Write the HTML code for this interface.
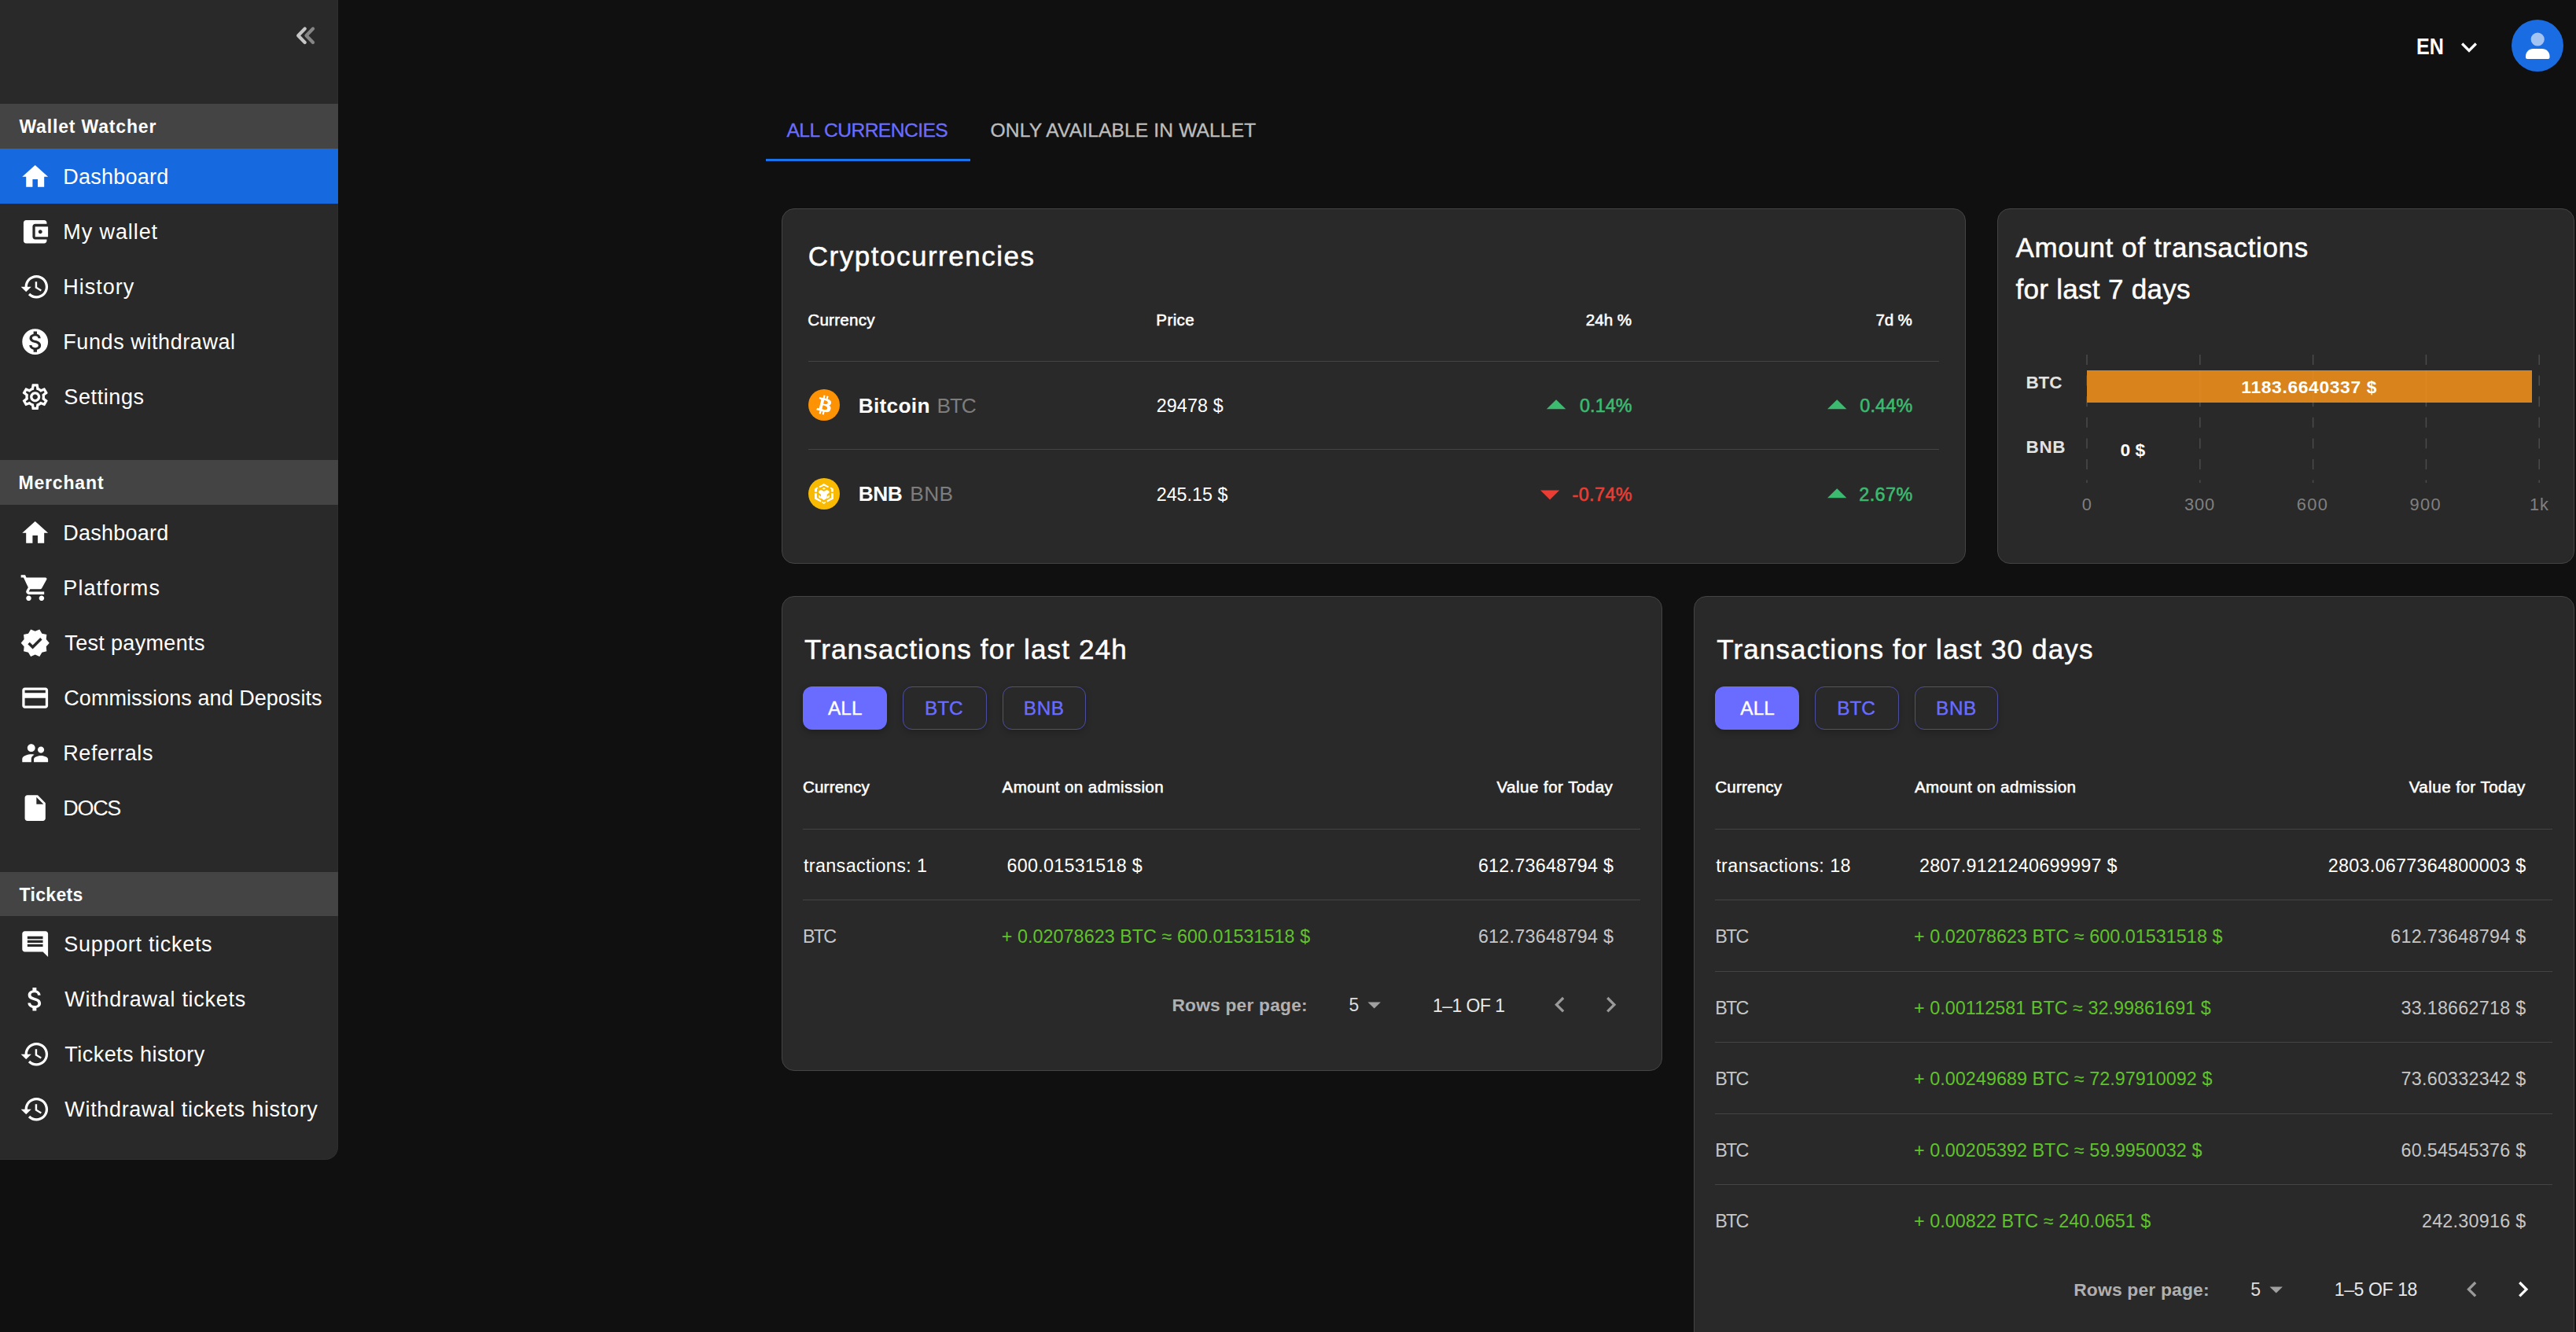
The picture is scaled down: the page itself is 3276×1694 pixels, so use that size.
<!DOCTYPE html>
<html><head><meta charset="utf-8"><title>Dashboard</title>
<style>
html,body{margin:0;padding:0;}
body{width:3276px;height:1694px;overflow:hidden;background:#101010;position:relative;font-family:"Liberation Sans",sans-serif;}
.t{position:absolute;white-space:pre;line-height:1;}
.b{position:absolute;box-sizing:content-box;}
.card{background:#292929;border:1px solid #444;border-radius:16px;box-sizing:border-box;}
</style></head><body>
<div class="b" style="left:0px;top:0px;width:429px;height:1474px;background:#292929;border-bottom-right-radius:16px;border-right:1px solid #2f2f2f;border-bottom:1px solid #2f2f2f;"></div>
<svg class="b" style="left:370px;top:28px" width="36" height="34" viewBox="370 28 36 34"><path d="M387.7 36.6 L379.2 45.2 L387.7 53.9" fill="none" stroke="#c6c6c6" stroke-width="4.3" stroke-linecap="round" stroke-linejoin="round"/><path d="M398 36.6 L389.5 45.2 L398 53.9" fill="none" stroke="#858585" stroke-width="4.3" stroke-linecap="round" stroke-linejoin="round"/></svg>
<div class="b" style="left:0px;top:132px;width:430px;height:57px;background:#444444;"></div>
<span class="t" style="left:24.40px;top:149.53px;font-size:23px;color:#fff;font-weight:700;letter-spacing:0.830px;">Wallet Watcher</span>
<div class="b" style="left:0px;top:189px;width:430px;height:70px;background:#1769e0;"></div>
<svg class="b" style="left:24.70px;top:204.60px;" width="39.4" height="39.4" viewBox="0 0 24 24"><path fill="#fff" d="M10 20v-6h4v6h5v-8h3L12 3 2 12h3v8z"/></svg>
<span class="t" style="left:80.30px;top:211.74px;font-size:27px;color:#fff;letter-spacing:0.241px;">Dashboard</span>
<svg class="b" style="left:24.70px;top:274.60px;" width="39.4" height="39.4" viewBox="0 0 24 24"><path fill="#fff" d="M21 18v1c0 1.1-.9 2-2 2H5c-1.11 0-2-.9-2-2V5c0-1.1.89-2 2-2h14c1.1 0 2 .9 2 2v1h-9c-1.11 0-2 .9-2 2v8c0 1.1.89 2 2 2h9zm-9-2h10V8H12v8zm4-2.5c-.83 0-1.5-.67-1.5-1.5s.67-1.5 1.5-1.5 1.5.67 1.5 1.5-.67 1.5-1.5 1.5z"/></svg>
<span class="t" style="left:80.30px;top:281.74px;font-size:27px;color:#fff;letter-spacing:0.910px;">My wallet</span>
<svg class="b" style="left:24.70px;top:344.60px;" width="39.4" height="39.4" viewBox="0 0 24 24"><path fill="#fff" d="M13 3c-4.97 0-9 4.03-9 9H1l3.89 3.89.07.14L9 12H6c0-3.87 3.13-7 7-7s7 3.13 7 7-3.13 7-7 7c-1.93 0-3.68-.79-4.94-2.06l-1.42 1.42C8.27 19.99 10.51 21 13 21c4.97 0 9-4.03 9-9s-4.03-9-9-9zm-1 5v5l4.28 2.54.72-1.21-3.5-2.08V8H12z"/></svg>
<span class="t" style="left:80.30px;top:351.74px;font-size:27px;color:#fff;letter-spacing:0.982px;">History</span>
<svg class="b" style="left:24.70px;top:414.60px;" width="39.4" height="39.4" viewBox="0 0 24 24"><path fill="#fff" d="M12 2C6.48 2 2 6.48 2 12s4.48 10 10 10 10-4.48 10-10S17.52 2 12 2zm1.41 16.09V20h-2.67v-1.93c-1.71-.36-3.16-1.46-3.27-3.4h1.96c.1 1.05.82 1.87 2.65 1.87 1.96 0 2.4-.98 2.4-1.59 0-.83-.44-1.61-2.67-2.14-2.48-.6-4.18-1.62-4.18-3.67 0-1.72 1.39-2.84 3.11-3.21V4h2.67v1.95c1.86.45 2.79 1.86 2.85 3.39H14.3c-.05-1.11-.64-1.87-2.22-1.87-1.5 0-2.4.68-2.4 1.64 0 .84.65 1.39 2.67 1.91s4.18 1.39 4.18 3.91c-.01 1.83-1.38 2.83-3.12 3.16z"/></svg>
<span class="t" style="left:80.30px;top:421.74px;font-size:27px;color:#fff;letter-spacing:0.580px;">Funds withdrawal</span>
<svg class="b" style="left:24.70px;top:484.60px;" width="39.4" height="39.4" viewBox="0 0 24 24"><path fill="#fff" d="M19.43 12.98c.04-.32.07-.64.07-.98 0-.34-.03-.66-.07-.98l2.11-1.65c.19-.15.24-.42.12-.64l-2-3.46c-.09-.16-.26-.25-.44-.25-.06 0-.12.01-.17.03l-2.49 1c-.52-.4-1.08-.73-1.69-.98l-.38-2.65C14.46 2.18 14.25 2 14 2h-4c-.25 0-.46.18-.49.42l-.38 2.65c-.61.25-1.17.59-1.69.98l-2.49-1c-.06-.02-.12-.03-.18-.03-.17 0-.34.09-.43.25l-2 3.46c-.13.22-.07.49.12.64l2.11 1.65c-.04.32-.07.65-.07.98 0 .33.03.66.07.98l-2.11 1.65c-.19.15-.24.42-.12.64l2 3.46c.09.16.26.25.44.25.06 0 .12-.01.17-.03l2.49-1c.52.4 1.08.73 1.69.98l.38 2.65c.03.24.24.42.49.42h4c.25 0 .46-.18.49-.42l.38-2.65c.61-.25 1.17-.59 1.69-.98l2.49 1c.06.02.12.03.18.03.17 0 .34-.09.43-.25l2-3.46c.12-.22.07-.49-.12-.64l-2.11-1.65zm-1.98-1.71c.04.31.05.52.05.73 0 .21-.02.43-.05.73l-.14 1.13.89.7 1.08.84-.7 1.21-1.27-.51-1.04-.42-.9.68c-.43.32-.84.56-1.25.73l-1.06.43-.16 1.13-.2 1.35h-1.4l-.19-1.35-.16-1.13-1.06-.43c-.43-.18-.83-.41-1.23-.71l-.91-.7-1.06.43-1.27.51-.7-1.21 1.08-.84.89-.7-.14-1.13c-.03-.31-.05-.54-.05-.74s.02-.43.05-.73l.14-1.13-.89-.7-1.08-.84.7-1.21 1.27.51 1.04.42.9-.68c.43-.32.84-.56 1.25-.73l1.06-.43.16-1.13.2-1.35h1.39l.19 1.35.16 1.13 1.06.43c.43.18.83.41 1.23.71l.91.7 1.06-.43 1.27-.51.7 1.21-1.07.85-.89.7.14 1.13zM12 8c-2.210 0-4 1.790-4 4s1.790 4 4 4 4-1.790 4-4-1.790-4-4-4zm0 6c-1.100 0-2-.9-2-2s.9-2 2-2 2 .9 2 2-.9 2-2 2z"/></svg>
<span class="t" style="left:81.30px;top:491.74px;font-size:27px;color:#fff;letter-spacing:0.606px;">Settings</span>
<div class="b" style="left:0px;top:585px;width:430px;height:57px;background:#444444;"></div>
<span class="t" style="left:23.40px;top:602.53px;font-size:23px;color:#fff;font-weight:700;letter-spacing:0.845px;">Merchant</span>
<svg class="b" style="left:24.70px;top:657.60px;" width="39.4" height="39.4" viewBox="0 0 24 24"><path fill="#fff" d="M10 20v-6h4v6h5v-8h3L12 3 2 12h3v8z"/></svg>
<span class="t" style="left:80.30px;top:664.74px;font-size:27px;color:#fff;letter-spacing:0.241px;">Dashboard</span>
<svg class="b" style="left:24.70px;top:727.60px;" width="39.4" height="39.4" viewBox="0 0 24 24"><path fill="#fff" d="M7 18c-1.1 0-1.99.9-1.99 2S5.9 22 7 22s2-.9 2-2-.9-2-2-2zM1 2v2h2l3.6 7.59-1.35 2.45c-.16.28-.25.61-.25.96 0 1.1.9 2 2 2h12v-2H7.42c-.14 0-.25-.11-.25-.25l.03-.12.9-1.63h7.45c.75 0 1.41-.41 1.75-1.03l3.58-6.49c.08-.14.12-.31.12-.48 0-.55-.45-1-1-1H5.21l-.94-2H1zm16 16c-1.1 0-1.99.9-1.99 2s.89 2 1.99 2 2-.9 2-2-.9-2-2-2z"/></svg>
<span class="t" style="left:80.30px;top:734.74px;font-size:27px;color:#fff;letter-spacing:1.072px;">Platforms</span>
<svg class="b" style="left:24.70px;top:797.60px;" width="39.4" height="39.4" viewBox="0 0 24 24"><path fill="#fff" d="M23 12l-2.44-2.79.34-3.69-3.61-.82-1.89-3.2L12 2.96 8.6 1.5 6.71 4.69 3.1 5.5l.34 3.7L1 12l2.44 2.79-.34 3.7 3.61.82L8.6 22.5l3.4-1.47 3.4 1.46 1.89-3.19 3.61-.82-.34-3.69L23 12zm-12.91 4.72l-3.8-3.81 1.48-1.48 2.32 2.33 5.85-5.87 1.48 1.48-7.33 7.35z"/></svg>
<span class="t" style="left:82.30px;top:804.74px;font-size:27px;color:#fff;letter-spacing:0.335px;">Test payments</span>
<svg class="b" style="left:24.70px;top:867.60px;" width="39.4" height="39.4" viewBox="0 0 24 24"><path fill="#fff" d="M20 4H4c-1.11 0-1.99.89-1.99 2L2 18c0 1.11.89 2 2 2h16c1.11 0 2-.89 2-2V6c0-1.11-.89-2-2-2zm0 14H4v-6h16v6zm0-10H4V6h16v2z"/></svg>
<span class="t" style="left:81.30px;top:874.74px;font-size:27px;color:#fff;letter-spacing:0.047px;">Commissions and Deposits</span>
<svg class="b" style="left:24.70px;top:937.60px;" width="39.4" height="39.4" viewBox="0 0 24 24"><path fill="#fff" d="M16.5 12c1.38 0 2.49-1.12 2.49-2.5S17.88 7 16.5 7C15.12 7 14 8.12 14 9.5s1.12 2.5 2.5 2.5zM9 11c1.66 0 2.99-1.34 2.99-3S10.66 5 9 5C7.34 5 6 6.34 6 8s1.34 3 3 3zm7.5 3c-1.83 0-5.5.92-5.5 2.75V19h11v-2.25c0-1.83-3.67-2.75-5.5-2.75zM9 13c-2.33 0-7 1.17-7 3.5V19h7v-2.25c0-.85.33-2.34 2.37-3.47C10.5 13.1 9.66 13 9 13z"/></svg>
<span class="t" style="left:80.30px;top:944.74px;font-size:27px;color:#fff;letter-spacing:0.571px;">Referrals</span>
<svg class="b" style="left:24.70px;top:1007.60px;" width="39.4" height="39.4" viewBox="0 0 24 24"><path fill="#fff" d="M6 2c-1.1 0-1.99.9-1.99 2L4 20c0 1.1.89 2 1.99 2H18c1.1 0 2-.9 2-2V8l-6-6H6zm7 7V3.5L18.500 9H13z"/></svg>
<span class="t" style="left:80.30px;top:1014.74px;font-size:27px;color:#fff;letter-spacing:-1.333px;">DOCS</span>
<div class="b" style="left:0px;top:1109px;width:430px;height:56px;background:#444444;"></div>
<span class="t" style="left:24.40px;top:1126.53px;font-size:23px;color:#fff;font-weight:700;letter-spacing:0.357px;">Tickets</span>
<svg class="b" style="left:24.70px;top:1180.60px;" width="39.4" height="39.4" viewBox="0 0 24 24"><path fill="#fff" d="M21.99 4c0-1.1-.89-2-1.99-2H4c-1.1 0-2 .9-2 2v12c0 1.1.9 2 2 2h14l4 4-.01-18zM18 14H6v-2h12v2zm0-3H6V9h12v2zm0-3H6V6h12v2z"/></svg>
<span class="t" style="left:81.30px;top:1187.74px;font-size:27px;color:#fff;letter-spacing:0.694px;">Support tickets</span>
<svg class="b" style="left:24.70px;top:1250.60px;" width="39.4" height="39.4" viewBox="0 0 24 24"><path fill="#fff" d="M11.8 10.9c-2.27-.59-3-1.2-3-2.15 0-1.09 1.01-1.85 2.7-1.85 1.78 0 2.44.85 2.5 2.1h2.21c-.07-1.72-1.12-3.3-3.21-3.81V3h-3v2.16c-1.94.42-3.5 1.68-3.5 3.61 0 2.31 1.91 3.46 4.7 4.13 2.5.6 3 1.48 3 2.41 0 .69-.49 1.79-2.7 1.79-2.06 0-2.87-.92-2.98-2.1h-2.2c.12 2.19 1.76 3.42 3.68 3.83V21h3v-2.15c1.95-.37 3.5-1.5 3.5-3.55 0-2.84-2.43-3.81-4.7-4.4z"/></svg>
<span class="t" style="left:82.30px;top:1257.74px;font-size:27px;color:#fff;letter-spacing:0.732px;">Withdrawal tickets</span>
<svg class="b" style="left:24.70px;top:1320.60px;" width="39.4" height="39.4" viewBox="0 0 24 24"><path fill="#fff" d="M13 3c-4.97 0-9 4.03-9 9H1l3.89 3.89.07.14L9 12H6c0-3.87 3.13-7 7-7s7 3.13 7 7-3.13 7-7 7c-1.93 0-3.68-.79-4.94-2.06l-1.42 1.42C8.27 19.99 10.51 21 13 21c4.97 0 9-4.03 9-9s-4.03-9-9-9zm-1 5v5l4.28 2.54.72-1.21-3.5-2.08V8H12z"/></svg>
<span class="t" style="left:82.30px;top:1327.74px;font-size:27px;color:#fff;letter-spacing:0.462px;">Tickets history</span>
<svg class="b" style="left:24.70px;top:1390.60px;" width="39.4" height="39.4" viewBox="0 0 24 24"><path fill="#fff" d="M13 3c-4.97 0-9 4.03-9 9H1l3.89 3.89.07.14L9 12H6c0-3.87 3.13-7 7-7s7 3.13 7 7-3.13 7-7 7c-1.93 0-3.68-.79-4.94-2.06l-1.42 1.42C8.27 19.99 10.51 21 13 21c4.97 0 9-4.03 9-9s-4.03-9-9-9zm-1 5v5l4.28 2.54.72-1.21-3.5-2.08V8H12z"/></svg>
<span class="t" style="left:82.30px;top:1397.74px;font-size:27px;color:#fff;letter-spacing:0.677px;">Withdrawal tickets history</span>
<span class="t" style="left:3073.13px;top:45.02px;font-size:28.8px;color:#fff;font-weight:700;transform:scaleX(0.8708);transform-origin:0 0;">EN</span>
<svg class="b" style="left:3120.00px;top:39.60px;" width="40" height="40" viewBox="0 0 24 24"><path fill="#fff" d="M16.59 8.59L12 13.17 7.41 8.59 6 10l6 6 6-6z"/></svg>
<div class="b" style="left:3194px;top:25px;width:66px;height:66px;border-radius:50%;background:#1a6ce2"></div>
<svg class="b" style="left:3194px;top:25px" width="66" height="66" viewBox="3194 25 66 66"><circle cx="3227.2" cy="50" r="8.6" fill="#fff" fill-opacity=".6"/><path d="M3214 74.9c-1.1 0-2-.9-2-2v-1.500c0-5.300 4.300-9.500 9.500-9.500h11.500c5.200 0 9.500 4.200 9.500 9.500v1.500c0 1.100-.9 2-2 2z" fill="#fff"/></svg>
<span class="t" style="left:1000.50px;top:154.28px;font-size:24.6px;color:#696cff;letter-spacing:-0.546px;-webkit-text-stroke:0.35px #696cff;">ALL CURRENCIES</span>
<span class="t" style="left:1259.60px;top:154.28px;font-size:24.6px;color:#bdbdbd;letter-spacing:0.119px;-webkit-text-stroke:0.35px #bdbdbd;">ONLY AVAILABLE IN WALLET</span>
<div class="b" style="left:974px;top:202px;width:260px;height:3.3px;background:#1a73e8;"></div>
<div class="b card" style="left:994px;top:265px;width:1506px;height:452px"></div>
<span class="t" style="left:1027.80px;top:308.17px;font-size:35px;color:#fff;letter-spacing:1.511px;-webkit-text-stroke:0.5px #fff;">Cryptocurrencies</span>
<span class="t" style="left:1027.30px;top:396.56px;font-size:20.6px;color:#fff;letter-spacing:0.251px;-webkit-text-stroke:0.55px #fff;">Currency</span>
<span class="t" style="left:1470.30px;top:396.56px;font-size:20.6px;color:#fff;letter-spacing:0.384px;-webkit-text-stroke:0.55px #fff;">Price</span>
<span class="t" style="left:2016.80px;top:396.56px;font-size:20.6px;color:#fff;letter-spacing:-0.020px;-webkit-text-stroke:0.55px #fff;">24h %</span>
<span class="t" style="left:2385.50px;top:396.56px;font-size:20.6px;color:#fff;letter-spacing:-0.209px;-webkit-text-stroke:0.55px #fff;">7d %</span>
<div class="b" style="left:1028px;top:459px;width:1438px;height:1px;background:#444;"></div>
<div class="b" style="left:1028px;top:571px;width:1438px;height:1px;background:#444;"></div>
<svg class="b" style="left:1028px;top:495px" width="40" height="40" viewBox="0 0 32 32"><circle cx="16" cy="16" r="16" fill="#fd9204"/><path fill="#FFF" d="M23.189 14.02c.314-2.096-1.283-3.223-3.465-3.975l.708-2.84-1.728-.43-.69 2.765c-.454-.114-.92-.22-1.385-.326l.695-2.783L15.596 6l-.708 2.839c-.376-.086-.746-.17-1.104-.26l.002-.009-2.384-.595-.46 1.846s1.283.294 1.256.312c.7.175.826.638.805 1.006l-.806 3.235c.048.012.11.03.18.057l-.183-.045-1.13 4.532c-.086.212-.303.531-.793.41.018.025-1.256-.313-1.256-.313l-.858 1.978 2.25.561c.418.105.828.215 1.231.318l-.715 2.872 1.727.43.708-2.84c.472.127.93.245 1.378.357l-.706 2.828 1.728.43.715-2.866c2.948.558 5.164.333 6.097-2.333.752-2.146-.037-3.385-1.588-4.192 1.13-.26 1.98-1.003 2.207-2.538zm-3.95 5.538c-.533 2.147-4.148.986-5.32.695l.95-3.805c1.172.293 4.929.872 4.37 3.11zm.535-5.569c-.487 1.953-3.495.96-4.47.717l.86-3.45c.975.243 4.118.696 3.61 2.733z"/></svg>
<svg class="b" style="left:1028px;top:608px" width="40" height="40" viewBox="-20 -20 40 40"><circle r="20" fill="#f8ba02"/><polygon fill="#fff" points="-6.49,-9.37 -0.27,-13.06 6.13,-9.37 5.05,-7.84 -0.27,-10.36 -5.41,-7.84"/><polygon fill="#fff" points="-2.43,-6.58 -0.27,-7.93 1.98,-6.58 -0.27,-5.14"/><polygon fill="#fff" points="-11.98,-6.49 -8.92,-8.20 -7.30,-7.21 -9.01,-6.13 -9.01,-2.43 -11.98,-2.43"/><polygon fill="#fff" points="-11.98,-0.81 -9.19,-0.81 -9.19,5.05 -3.78,8.29 -3.78,10.63 -11.98,6.58"/><polygon fill="#fff" points="11.89,-6.49 8.83,-8.20 7.21,-7.21 8.92,-6.13 8.92,-2.43 11.89,-2.43"/><polygon fill="#fff" points="11.89,-0.81 9.10,-0.81 9.10,5.05 3.69,8.29 3.69,10.63 11.89,6.58"/><polygon fill="#fff" points="-6.94,-3.33 -3.96,-5.14 -0.27,-2.88 3.60,-5.14 6.58,-3.33 6.58,-1.17 3.69,1.08 3.69,5.68 -0.27,7.93 -3.96,5.68 -3.96,1.08 -6.94,-1.17"/><polygon fill="#fff" points="-6.94,1.53 -4.23,3.15 -4.23,6.13 -6.94,4.50"/><polygon fill="#fff" points="4.05,3.15 6.76,1.53 6.76,4.50 4.05,6.13"/><polygon fill="#fff" points="-2.61,9.64 -0.27,11.08 2.07,9.64 2.07,11.53 -0.27,13.11 -2.61,11.53"/></svg>
<span class="t" style="left:1091.70px;top:502.74px;font-size:26.3px;color:#fff;font-weight:700;letter-spacing:0.275px;">Bitcoin</span>
<span class="t" style="left:1191.50px;top:502.74px;font-size:26.3px;color:#7d7d7d;letter-spacing:-1.151px;">BTC</span>
<span class="t" style="left:1091.70px;top:615.14px;font-size:26.3px;color:#fff;font-weight:700;letter-spacing:-0.491px;">BNB</span>
<span class="t" style="left:1157.30px;top:615.14px;font-size:26.3px;color:#7d7d7d;letter-spacing:0.385px;">BNB</span>
<span class="t" style="left:1470.70px;top:505.08px;font-size:23.3px;color:#fff;letter-spacing:0.124px;">29478 $</span>
<span class="t" style="left:1470.70px;top:618.08px;font-size:23.3px;color:#fff;">245.15 $</span>
<span class="t" style="left:2009.00px;top:505.18px;font-size:23.3px;color:#3cba70;letter-spacing:0.114px;-webkit-text-stroke:0.6px #3cba70;">0.14%</span>
<svg class="b" style="left:0;top:0" width="3276" height="1694"><polygon points="1966.8,520.2 1979.05,508.2 1991.3,520.2" fill="#3cba70"/></svg>
<span class="t" style="left:2365.20px;top:505.18px;font-size:23.3px;color:#3cba70;letter-spacing:0.239px;-webkit-text-stroke:0.6px #3cba70;">0.44%</span>
<svg class="b" style="left:0;top:0" width="3276" height="1694"><polygon points="2324,520.2 2336.2,508.2 2348.4,520.2" fill="#3cba70"/></svg>
<span class="t" style="left:1999.50px;top:618.08px;font-size:23.3px;color:#ea3d33;letter-spacing:0.440px;-webkit-text-stroke:0.6px #ea3d33;">-0.74%</span>
<svg class="b" style="left:0;top:0" width="3276" height="1694"><polygon points="1959,623.4 1971.1,635.6 1983.2,623.4" fill="#ea3d33"/></svg>
<span class="t" style="left:2364.20px;top:618.08px;font-size:23.3px;color:#3cba70;letter-spacing:0.489px;-webkit-text-stroke:0.6px #3cba70;">2.67%</span>
<svg class="b" style="left:0;top:0" width="3276" height="1694"><polygon points="2324,633.3 2336.2,621.2 2348.4,633.3" fill="#3cba70"/></svg>
<div class="b card" style="left:2540px;top:265px;width:734px;height:452px"></div>
<span class="t" style="left:2563.40px;top:296.57px;font-size:35px;color:#fff;letter-spacing:0.659px;-webkit-text-stroke:0.5px #fff;">Amount of transactions</span>
<span class="t" style="left:2563.40px;top:349.97px;font-size:35px;color:#fff;letter-spacing:0.309px;-webkit-text-stroke:0.5px #fff;">for last 7 days</span>
<svg class="b" style="left:0;top:0" width="3276" height="1694"><line x1="2654" y1="451" x2="2654" y2="614" stroke="#4b4b4b" stroke-width="1.5" stroke-dasharray="13 13.6"/><line x1="2797.8" y1="451" x2="2797.8" y2="614" stroke="#4b4b4b" stroke-width="1.5" stroke-dasharray="13 13.6"/><line x1="2941.6" y1="451" x2="2941.6" y2="614" stroke="#4b4b4b" stroke-width="1.5" stroke-dasharray="13 13.6"/><line x1="3085.4" y1="451" x2="3085.4" y2="614" stroke="#4b4b4b" stroke-width="1.5" stroke-dasharray="13 13.6"/><line x1="3229.2" y1="451" x2="3229.2" y2="614" stroke="#4b4b4b" stroke-width="1.5" stroke-dasharray="13 13.6"/><rect x="2654" y="471" width="566" height="41" fill="#d9831d"/><line x1="2797.8" y1="471" x2="2797.8" y2="512" stroke="#db8823" stroke-width="1.5"/><line x1="2941.6" y1="471" x2="2941.6" y2="512" stroke="#db8823" stroke-width="1.5"/><line x1="3085.4" y1="471" x2="3085.4" y2="512" stroke="#db8823" stroke-width="1.5"/></svg>
<span class="t" style="left:2576.50px;top:475.94px;font-size:22.4px;color:#e2e2e2;font-weight:700;letter-spacing:-0.073px;">BTC</span>
<span class="t" style="left:2576.50px;top:557.84px;font-size:22.4px;color:#e2e2e2;font-weight:700;letter-spacing:0.730px;">BNB</span>
<span class="t" style="left:2850.30px;top:480.70px;font-size:22.8px;color:#fff;font-weight:700;letter-spacing:0.664px;">1183.6640337 $</span>
<span class="t" style="left:2696.40px;top:561.40px;font-size:22.8px;color:#fff;font-weight:700;letter-spacing:0.044px;">0 $</span>
<span class="t" style="left:2647.70px;top:631.35px;font-size:21.8px;color:#808080;">0</span>
<span class="t" style="left:2778.00px;top:631.35px;font-size:21.8px;color:#808080;letter-spacing:0.878px;">300</span>
<span class="t" style="left:2920.80px;top:631.35px;font-size:21.8px;color:#808080;letter-spacing:1.378px;">600</span>
<span class="t" style="left:3064.60px;top:631.35px;font-size:21.8px;color:#808080;letter-spacing:1.378px;">900</span>
<span class="t" style="left:3217.00px;top:631.35px;font-size:21.8px;color:#808080;letter-spacing:0.878px;">1k</span>
<div class="b card" style="left:994px;top:758px;width:1120px;height:603.5px"></div>
<span class="t" style="left:1022.90px;top:807.97px;font-size:35px;color:#fff;letter-spacing:1.164px;-webkit-text-stroke:0.5px #fff;">Transactions for last 24h</span>
<div class="b" style="left:1021px;top:873px;width:107px;height:55px;border-radius:12px;background:#696cff;box-shadow:0 3px 8px rgba(0,0,0,.25)"></div>
<div class="b" style="left:1148px;top:873px;width:105px;height:53px;border-radius:12px;border:1px solid rgba(105,108,255,.55);box-shadow:0 3px 8px rgba(0,0,0,.2)"></div>
<div class="b" style="left:1275px;top:873px;width:104px;height:53px;border-radius:12px;border:1px solid rgba(105,108,255,.55);box-shadow:0 3px 8px rgba(0,0,0,.2)"></div>
<span class="t" style="left:1053.00px;top:888.83px;font-size:24.3px;color:#fff;letter-spacing:0.141px;-webkit-text-stroke:0.4px #fff;">ALL</span>
<span class="t" style="left:1176.00px;top:888.83px;font-size:24.3px;color:#696cff;letter-spacing:-0.024px;-webkit-text-stroke:0.4px #696cff;">BTC</span>
<span class="t" style="left:1301.80px;top:888.83px;font-size:24.3px;color:#696cff;letter-spacing:0.624px;-webkit-text-stroke:0.4px #696cff;">BNB</span>
<span class="t" style="left:1020.90px;top:990.66px;font-size:20.6px;color:#fff;letter-spacing:0.194px;-webkit-text-stroke:0.55px #fff;">Currency</span>
<span class="t" style="left:1274.60px;top:990.66px;font-size:20.6px;color:#fff;letter-spacing:0.390px;-webkit-text-stroke:0.55px #fff;">Amount on admission</span>
<span class="t" style="left:1903.40px;top:990.66px;font-size:20.6px;color:#fff;letter-spacing:0.452px;-webkit-text-stroke:0.55px #fff;">Value for Today</span>
<div class="b" style="left:1021px;top:1054px;width:1065px;height:1px;background:#444;"></div>
<span class="t" style="left:1021.90px;top:1090.28px;font-size:23.3px;color:#fff;letter-spacing:0.389px;">transactions: 1</span>
<span class="t" style="left:1280.60px;top:1090.28px;font-size:23.3px;color:#fff;letter-spacing:0.280px;">600.01531518 $</span>
<span class="t" style="left:1879.89px;top:1090.28px;font-size:23.3px;color:#fff;letter-spacing:0.280px;">612.73648794 $</span>
<div class="b" style="left:1021px;top:1144px;width:1065px;height:1px;background:#444;"></div>
<span class="t" style="left:1020.90px;top:1180.28px;font-size:23.3px;color:#c6c6c6;letter-spacing:-1.685px;">BTC</span>
<span class="t" style="left:1273.80px;top:1180.28px;font-size:23.3px;color:#5fc32a;letter-spacing:0.060px;">+ 0.02078623 BTC ≈ 600.01531518 $</span>
<span class="t" style="left:1879.89px;top:1180.28px;font-size:23.3px;color:#c6c6c6;letter-spacing:0.280px;">612.73648794 $</span>
<span class="t" style="left:1490.40px;top:1267.45px;font-size:22.8px;color:#b0b0b0;font-weight:700;letter-spacing:0.196px;">Rows per page:</span>
<span class="t" style="left:1715.50px;top:1266.78px;font-size:23px;color:#dcdcdc;">5</span>
<svg class="b" style="left:1728.30px;top:1258.25px;" width="39.4" height="39.4" viewBox="0 0 24 24"><path fill="#a0a0a0" d="M7 10l5 5 5-5z"/></svg>
<span class="t" style="left:1822.00px;top:1267.68px;font-size:23px;color:#e8e8e8;letter-spacing:-0.542px;">1–1 OF 1</span>
<svg class="b" style="left:1963.90px;top:1257.95px;" width="39.4" height="39.4" viewBox="0 0 24 24"><path fill="#9a9a9a" d="M15.41 7.41L14 6l-6 6 6 6 1.41-1.41L10.83 12z"/></svg>
<svg class="b" style="left:2028.90px;top:1257.95px;" width="39.4" height="39.4" viewBox="0 0 24 24"><path fill="#9a9a9a" d="M10 6L8.59 7.41 13.17 12l-4.58 4.59L10 18l6-6z"/></svg>
<div class="b card" style="left:2154.3px;top:758px;width:1120px;height:1000px"></div>
<span class="t" style="left:2183.20px;top:807.97px;font-size:35px;color:#fff;letter-spacing:1.149px;-webkit-text-stroke:0.5px #fff;">Transactions for last 30 days</span>
<div class="b" style="left:2181.3px;top:873px;width:107px;height:55px;border-radius:12px;background:#696cff;box-shadow:0 3px 8px rgba(0,0,0,.25)"></div>
<div class="b" style="left:2308.3px;top:873px;width:105px;height:53px;border-radius:12px;border:1px solid rgba(105,108,255,.55);box-shadow:0 3px 8px rgba(0,0,0,.2)"></div>
<div class="b" style="left:2435.3px;top:873px;width:104px;height:53px;border-radius:12px;border:1px solid rgba(105,108,255,.55);box-shadow:0 3px 8px rgba(0,0,0,.2)"></div>
<span class="t" style="left:2213.30px;top:888.83px;font-size:24.3px;color:#fff;letter-spacing:0.141px;-webkit-text-stroke:0.4px #fff;">ALL</span>
<span class="t" style="left:2336.30px;top:888.83px;font-size:24.3px;color:#696cff;letter-spacing:-0.024px;-webkit-text-stroke:0.4px #696cff;">BTC</span>
<span class="t" style="left:2462.10px;top:888.83px;font-size:24.3px;color:#696cff;letter-spacing:0.624px;-webkit-text-stroke:0.4px #696cff;">BNB</span>
<span class="t" style="left:2181.20px;top:990.66px;font-size:20.6px;color:#fff;letter-spacing:0.194px;-webkit-text-stroke:0.55px #fff;">Currency</span>
<span class="t" style="left:2434.90px;top:990.66px;font-size:20.6px;color:#fff;letter-spacing:0.390px;-webkit-text-stroke:0.55px #fff;">Amount on admission</span>
<span class="t" style="left:3063.70px;top:990.66px;font-size:20.6px;color:#fff;letter-spacing:0.452px;-webkit-text-stroke:0.55px #fff;">Value for Today</span>
<div class="b" style="left:2181.3px;top:1054px;width:1065.0px;height:1px;background:#444;"></div>
<span class="t" style="left:2182.20px;top:1090.28px;font-size:23.3px;color:#fff;letter-spacing:0.459px;">transactions: 18</span>
<span class="t" style="left:2440.90px;top:1090.28px;font-size:23.3px;color:#fff;letter-spacing:0.280px;">2807.9121240699997 $</span>
<span class="t" style="left:2960.77px;top:1090.28px;font-size:23.3px;color:#fff;letter-spacing:0.280px;">2803.0677364800003 $</span>
<div class="b" style="left:2181.3px;top:1144px;width:1065.0px;height:1px;background:#444;"></div>
<span class="t" style="left:2181.20px;top:1180.28px;font-size:23.3px;color:#c6c6c6;letter-spacing:-1.685px;">BTC</span>
<span class="t" style="left:2434.10px;top:1180.28px;font-size:23.3px;color:#5fc32a;letter-spacing:0.060px;">+ 0.02078623 BTC ≈ 600.01531518 $</span>
<span class="t" style="left:3040.19px;top:1180.28px;font-size:23.3px;color:#c6c6c6;letter-spacing:0.280px;">612.73648794 $</span>
<div class="b" style="left:2181.3px;top:1235px;width:1065.0px;height:1px;background:#444;"></div>
<span class="t" style="left:2181.20px;top:1271.28px;font-size:23.3px;color:#c6c6c6;letter-spacing:-1.685px;">BTC</span>
<span class="t" style="left:2434.10px;top:1271.28px;font-size:23.3px;color:#5fc32a;letter-spacing:0.060px;">+ 0.00112581 BTC ≈ 32.99861691 $</span>
<span class="t" style="left:3053.43px;top:1271.28px;font-size:23.3px;color:#c6c6c6;letter-spacing:0.280px;">33.18662718 $</span>
<div class="b" style="left:2181.3px;top:1325px;width:1065.0px;height:1px;background:#444;"></div>
<span class="t" style="left:2181.20px;top:1361.28px;font-size:23.3px;color:#c6c6c6;letter-spacing:-1.685px;">BTC</span>
<span class="t" style="left:2434.10px;top:1361.28px;font-size:23.3px;color:#5fc32a;letter-spacing:0.060px;">+ 0.00249689 BTC ≈ 72.97910092 $</span>
<span class="t" style="left:3053.43px;top:1361.28px;font-size:23.3px;color:#c6c6c6;letter-spacing:0.280px;">73.60332342 $</span>
<div class="b" style="left:2181.3px;top:1416px;width:1065.0px;height:1px;background:#444;"></div>
<span class="t" style="left:2181.20px;top:1452.28px;font-size:23.3px;color:#c6c6c6;letter-spacing:-1.685px;">BTC</span>
<span class="t" style="left:2434.10px;top:1452.28px;font-size:23.3px;color:#5fc32a;letter-spacing:0.060px;">+ 0.00205392 BTC ≈ 59.9950032 $</span>
<span class="t" style="left:3053.43px;top:1452.28px;font-size:23.3px;color:#c6c6c6;letter-spacing:0.280px;">60.54545376 $</span>
<div class="b" style="left:2181.3px;top:1506px;width:1065.0px;height:1px;background:#444;"></div>
<span class="t" style="left:2181.20px;top:1542.28px;font-size:23.3px;color:#c6c6c6;letter-spacing:-1.685px;">BTC</span>
<span class="t" style="left:2434.10px;top:1542.28px;font-size:23.3px;color:#5fc32a;letter-spacing:0.060px;">+ 0.00822 BTC ≈ 240.0651 $</span>
<span class="t" style="left:3079.90px;top:1542.28px;font-size:23.3px;color:#c6c6c6;letter-spacing:0.280px;">242.30916 $</span>
<span class="t" style="left:2637.20px;top:1629.25px;font-size:22.8px;color:#b0b0b0;font-weight:700;letter-spacing:0.196px;">Rows per page:</span>
<span class="t" style="left:2862.30px;top:1628.58px;font-size:23px;color:#dcdcdc;">5</span>
<svg class="b" style="left:2875.10px;top:1620.05px;" width="39.4" height="39.4" viewBox="0 0 24 24"><path fill="#a0a0a0" d="M7 10l5 5 5-5z"/></svg>
<span class="t" style="left:2968.80px;top:1629.48px;font-size:23px;color:#e8e8e8;letter-spacing:-0.386px;">1–5 OF 18</span>
<svg class="b" style="left:3124.20px;top:1619.75px;" width="39.4" height="39.4" viewBox="0 0 24 24"><path fill="#9a9a9a" d="M15.41 7.41L14 6l-6 6 6 6 1.41-1.41L10.83 12z"/></svg>
<svg class="b" style="left:3189.20px;top:1619.75px;" width="39.4" height="39.4" viewBox="0 0 24 24"><path fill="#ffffff" d="M10 6L8.59 7.41 13.17 12l-4.58 4.59L10 18l6-6z"/></svg>
</body></html>
